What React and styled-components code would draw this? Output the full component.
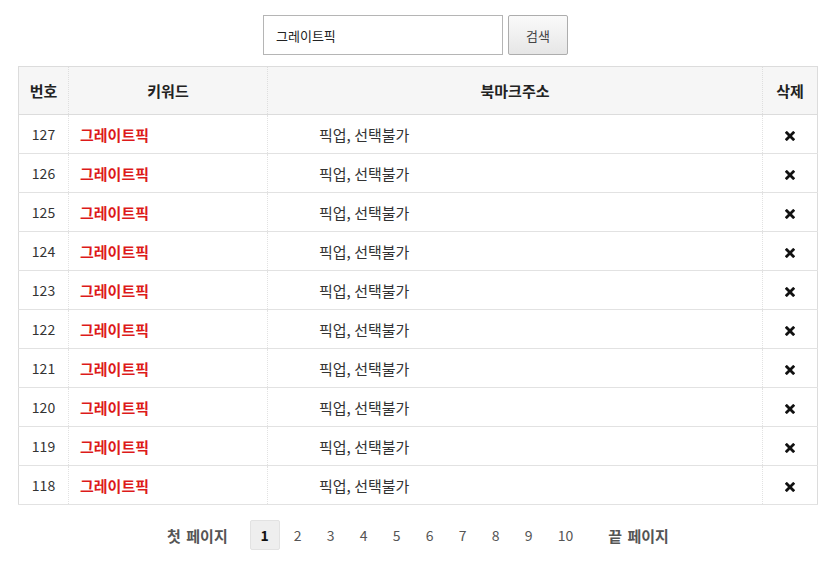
import React from "react";
import styled, { createGlobalStyle } from "styled-components";

const Global = createGlobalStyle`
  body {
    margin: 0;
    background: #fff;
    font-family: "Noto Sans CJK KR", "Noto Sans", sans-serif;
    color: #333;
  }
`;

const Page = styled.div`
  width: 800px;
  padding: 15px 0 0 18px;
`;

const SearchForm = styled.form`
  display: flex;
  justify-content: center;
  gap: 5px;
  margin: 0 0 11px -5px;
`;

const SearchInput = styled.input`
  box-sizing: border-box;
  width: 240px;
  height: 40px;
  border: 1px solid #b5b5b5;
  padding: 0 12px;
  font-family: inherit;
  font-size: 13px;
  color: #222;
  outline: none;
`;

const SearchButton = styled.button`
  box-sizing: border-box;
  width: 60px;
  height: 40px;
  border: 1px solid #adadad;
  border-radius: 2px;
  background: linear-gradient(#fafafa, #e6e6e6);
  font-family: inherit;
  font-size: 13px;
  color: #444;
`;

const Table = styled.table`
  width: 800px;
  border-collapse: collapse;
  table-layout: fixed;
  border: 1px solid #dcdcdc;
  font-size: 15px;
`;

const Th = styled.th`
  height: 47px;
  padding: 0;
  background: #f6f6f6;
  border-bottom: 1px solid #dcdcdc;
  border-left: 1px dotted #dedede;
  font-weight: bold;
  color: #222;
  text-align: center;
  &:first-child { border-left: none; }
`;

const Td = styled.td`
  height: 38px;
  padding: 0 0 0 ${(p) => p.$indent || 0}px;
  border-bottom: 1px solid #e2e2e2;
  border-left: 1px dotted #e2e2e2;
  text-align: ${(p) => p.$align || "left"};
  font-size: ${(p) => (p.$num ? "14px" : "15px")};
  color: #333;
  &:first-child { border-left: none; }
`;

const Keyword = styled.span`
  color: #dd1a1a;
  font-weight: bold;
`;

const DeleteButton = styled.button`
  border: none;
  background: none;
  padding: 0;
  display: inline-flex;
  cursor: pointer;
`;

const Pager = styled.nav`
  display: flex;
  justify-content: center;
  align-items: center;
  gap: 3px;
  margin-top: 15px;
  font-size: 14px;
`;

const EdgeLink = styled.a`
  color: #555;
  font-weight: bold;
  font-size: 15px;
  margin: ${(p) => (p.$last ? "0 0 0 21px" : "0 19px 0 0")};
  word-spacing: 2px;
`;

const PageNum = styled.a`
  box-sizing: border-box;
  min-width: 30px;
  height: 30px;
  padding: 0 ${(p) => (p.$wide ? 10 : 0)}px;
  display: flex;
  align-items: center;
  justify-content: center;
  color: ${(p) => (p.$active ? "#111" : "#555")};
  font-weight: ${(p) => (p.$active ? "bold" : "normal")};
  background: ${(p) => (p.$active ? "#eeeeee" : "transparent")};
  border: 1px solid ${(p) => (p.$active ? "#e2e2e2" : "transparent")};
  border-radius: 2px;
`;

const XIcon = () => (
  <svg width="10" height="10" viewBox="0 0 10 10">
    <path d="M1.8 1.8 L8.2 8.2 M8.2 1.8 L1.8 8.2" stroke="#111" strokeWidth="2.8" strokeLinecap="square" />
  </svg>
);

const rows = [127, 126, 125, 124, 123, 122, 121, 120, 119, 118];

export default function App() {
  return (
    <Page>
      <Global />
      <SearchForm onSubmit={(e) => e.preventDefault()}>
        <SearchInput defaultValue="그레이트픽" />
        <SearchButton type="submit">검색</SearchButton>
      </SearchForm>
      <Table>
        <colgroup>
          <col style={{ width: 50 }} />
          <col style={{ width: 199 }} />
          <col />
          <col style={{ width: 55 }} />
        </colgroup>
        <thead>
          <tr>
            <Th>번호</Th>
            <Th>키워드</Th>
            <Th>북마크주소</Th>
            <Th>삭제</Th>
          </tr>
        </thead>
        <tbody>
          {rows.map((n) => (
            <tr key={n}>
              <Td $align="center" $num>{n}</Td>
              <Td $indent={11}><Keyword>그레이트픽</Keyword></Td>
              <Td $indent={51}>픽업, 선택불가</Td>
              <Td $align="center">
                <DeleteButton><XIcon /></DeleteButton>
              </Td>
            </tr>
          ))}
        </tbody>
      </Table>
      <Pager>
        <EdgeLink>첫 페이지</EdgeLink>
        {[1, 2, 3, 4, 5, 6, 7, 8, 9, 10].map((p) => (
          <PageNum key={p} $active={p === 1} $wide={p === 10}>{p}</PageNum>
        ))}
        <EdgeLink $last>끝 페이지</EdgeLink>
      </Pager>
    </Page>
  );
}
